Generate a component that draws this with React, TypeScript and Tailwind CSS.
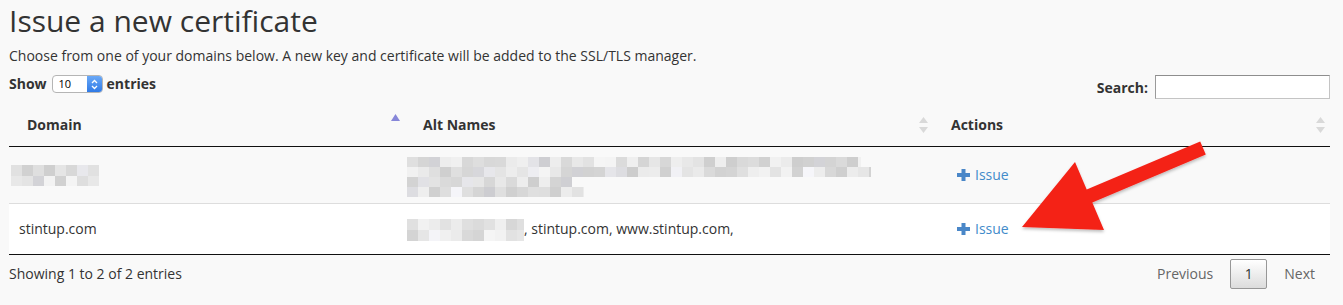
import React from "react";

function rand(seed: number) {
  let s = seed;
  return () => {
    s = (s * 9301 + 49297) % 233280;
    return s / 233280;
  };
}

function Pixelate({ rows, seed, cell = 11 }: { rows: { w: number; h: number }[]; seed: number; cell?: number }) {
  const r = rand(seed);
  return (
    <div className="flex flex-col">
      {rows.map((row, i) => {
        const n = Math.ceil(row.w / cell);
        return (
          <div key={i} className="flex" style={{ height: row.h }}>
            {Array.from({ length: n }).map((_, j) => {
              const v = Math.round(204 + r() * 42);
              const tint = r() < 0.15 ? 4 : 0;
              const w = j === n - 1 ? row.w - cell * (n - 1) : cell;
              return (
                <div
                  key={j}
                  style={{ width: w, height: row.h, background: `rgb(${v},${v},${Math.min(250, v + tint)})` }}
                />
              );
            })}
          </div>
        );
      })}
    </div>
  );
}

function SortBoth() {
  return (
    <svg width="9" height="16" viewBox="0 0 9 16" className="shrink-0">
      <polygon points="4.5,0 9,6 0,6" fill="#d9d9d9" />
      <polygon points="0,10 9,10 4.5,16" fill="#d9d9d9" />
    </svg>
  );
}

function SortAsc() {
  return (
    <svg width="9" height="16" viewBox="0 0 9 16" className="shrink-0">
      <polygon points="4.5,0 9,7 0,7" fill="#8787d9" />
    </svg>
  );
}

function Plus() {
  return (
    <svg width="13" height="12" viewBox="0 0 13 12" className="shrink-0">
      <rect x="0" y="4" width="13" height="4" fill="#4a87c8" />
      <rect x="4.5" y="0" width="4" height="12" fill="#4a87c8" />
    </svg>
  );
}

function IssueLink() {
  return (
    <a className="mt-[2px] inline-flex items-center gap-[5px] text-[#428bca] cursor-pointer">
      <Plus />
      <span>Issue</span>
    </a>
  );
}

export default function App() {
  return (
    <div className="relative w-[1343px] h-[305px] overflow-hidden bg-[#f9f9f9] font-['Open_Sans',sans-serif] text-[14px] leading-[20px] text-[#333]">
      <div className="pl-[9px] pr-[13px]">
        <h1 className="pt-[4px] text-[30px] leading-[33px] font-normal text-[#333]">Issue a new certificate</h1>
        <p className="mt-[9px]">
          Choose from one of your domains below. A new key and certificate will be added to the SSL/TLS manager.
        </p>

        <div className="mt-[7px] flex justify-between items-start h-[31px]">
          <div className="flex items-center font-bold mt-[1px]">
            <span>Show</span>
            <div className="ml-[5px] mr-[4px] flex h-[18px] w-[51px] rounded-[4px] border border-[#b5b5b5] bg-white overflow-hidden font-normal">
              <span className="flex-1 pl-[6px] text-[11px] leading-[16px] text-black">10</span>
              <span className="w-[15px] flex items-center justify-center bg-gradient-to-b from-[#6aa9f7] to-[#2f7ae6]">
                <svg width="7" height="11" viewBox="0 0 7 11">
                  <polyline points="1,4 3.5,1.5 6,4" fill="none" stroke="white" strokeWidth="1.3" />
                  <polyline points="1,7 3.5,9.5 6,7" fill="none" stroke="white" strokeWidth="1.3" />
                </svg>
              </span>
            </div>
            <span>entries</span>
          </div>
          <div className="flex items-center font-bold mt-[2px]">
            <span className="mt-[2px]">Search:</span>
            <input
              className="ml-[7px] h-[24px] w-[175px] bg-white border border-[#c4c4c4] border-t-[#8e8e8e] border-l-[#9a9a9a] outline-none"
              type="text"
            />
          </div>
        </div>

        <table className="w-full border-collapse table-fixed">
          <colgroup>
            <col className="w-[396px]" />
            <col className="w-[528px]" />
            <col />
          </colgroup>
          <thead>
            <tr className="h-[42px] border-b border-[#111]">
              <th className="pl-[18px] pr-[5px] text-left font-bold">
                <div className="flex items-center justify-between">
                  <span>Domain</span>
                  <span className="self-start -mt-[1px]">
                    <SortAsc />
                  </span>
                </div>
              </th>
              <th className="pl-[18px] pr-[5px] text-left font-bold">
                <div className="flex items-center justify-between">
                  <span>Alt Names</span>
                  <span className="mt-[1px]">
                    <SortBoth />
                  </span>
                </div>
              </th>
              <th className="pl-[18px] pr-[5px] text-left font-bold">
                <div className="flex items-center justify-between">
                  <span>Actions</span>
                  <span className="mt-[1px]">
                    <SortBoth />
                  </span>
                </div>
              </th>
            </tr>
          </thead>
          <tbody>
            <tr className="h-[57px] bg-[#f9f9f9]">
              <td className="pl-[2px] align-middle">
                <div className="mt-[1px]">
                  <Pixelate seed={7} rows={[{ w: 88, h: 11 }, { w: 88, h: 10 }]} />
                </div>
              </td>
              <td className="pl-[2px] align-middle">
                <div className="mt-[5px]">
                  <Pixelate
                    seed={31}
                    rows={[
                      { w: 454, h: 10 },
                      { w: 464, h: 10 },
                      { w: 165, h: 10 },
                      { w: 177, h: 10 },
                    ]}
                  />
                </div>
              </td>
              <td className="pl-[24px] align-middle">
                <IssueLink />
              </td>
            </tr>
            <tr className="h-[51px] bg-white border-t border-[#ddd] border-b border-b-[#111]">
              <td className="pl-[10px] align-middle">stintup.com</td>
              <td className="pl-[2px] align-middle">
                <div className="flex items-center">
                  <div className="mt-[3px]">
                    <Pixelate seed={57} rows={[{ w: 117, h: 11 }, { w: 117, h: 11 }]} />
                  </div>
                  <span>, stintup.com, www.stintup.com,</span>
                </div>
              </td>
              <td className="pl-[24px] align-middle">
                <IssueLink />
              </td>
            </tr>
          </tbody>
        </table>

        <div className="flex items-center justify-between h-[37px] mt-[1px]">
          <div>Showing 1 to 2 of 2 entries</div>
          <div className="flex items-center gap-[4px] pr-[2px] text-[#666]">
            <span className="px-[13px]">Previous</span>
            <span className="flex h-[30px] w-[37px] items-center justify-center rounded-[2px] border border-[#979797] bg-gradient-to-b from-white to-[#dcdcdc] text-[#333]">
              1
            </span>
            <span className="px-[13px]">Next</span>
          </div>
        </div>
      </div>

      <svg className="pointer-events-none absolute left-0 top-0" width="1343" height="305" viewBox="0 0 1343 305">
        <defs>
          <filter id="sh" x="-10%" y="-10%" width="120%" height="130%">
            <feDropShadow dx="0" dy="2" stdDeviation="1.5" floodColor="#000" floodOpacity="0.25" />
          </filter>
        </defs>
        <polygon
          filter="url(#sh)"
          fill="#f42118"
          points="1200.2,141.6 1086.7,189.6 1075,162 1022,227 1104,230 1092.3,202.4 1205.8,154.4"
        />
      </svg>
    </div>
  );
}
